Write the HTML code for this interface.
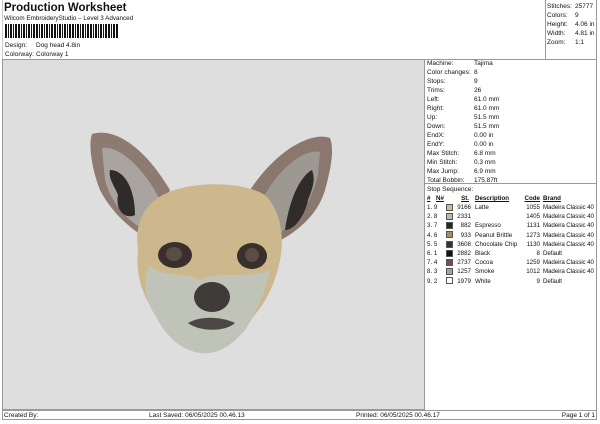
<!DOCTYPE html><html><head><style>
*{margin:0;padding:0;box-sizing:border-box}
body{width:600px;height:424px;background:#fff;position:relative;font-family:"Liberation Sans",sans-serif;font-size:6.5px;color:#111;overflow:hidden}
.a{position:absolute;white-space:nowrap;line-height:9px}
.r{text-align:right}
.t{font-size:6.2px}
.sw{position:absolute;width:7px;height:7px;border:1px solid #555}
u{text-decoration:underline;font-weight:bold}
</style></head><body>
<div class="a" style="left:4px;top:2px;font-size:11.5px;font-weight:bold;line-height:13px">Production Worksheet</div>
<div class="a" style="left:4px;top:14px;font-size:6.3px">Wilcom EmbroideryStudio – Level 3 Advanced</div>
<svg style="position:absolute;left:5px;top:24px" width="114" height="14">
<g fill="#111">
<rect x="0" width="2" height="14"/><rect x="3" width="1" height="14"/><rect x="5" width="2" height="14"/><rect x="8" width="1" height="14"/><rect x="10" width="2" height="14"/><rect x="13" width="2" height="14"/><rect x="16" width="1" height="14"/><rect x="18" width="2" height="14"/><rect x="21" width="1" height="14"/><rect x="23" width="2" height="14"/><rect x="26" width="1" height="14"/><rect x="28" width="2" height="14"/><rect x="31" width="2" height="14"/><rect x="34" width="1" height="14"/><rect x="36" width="2" height="14"/><rect x="39" width="1" height="14"/><rect x="41" width="2" height="14"/><rect x="44" width="1" height="14"/><rect x="46" width="2" height="14"/><rect x="49" width="2" height="14"/><rect x="52" width="1" height="14"/><rect x="54" width="2" height="14"/><rect x="57" width="1" height="14"/><rect x="59" width="2" height="14"/><rect x="62" width="1" height="14"/><rect x="64" width="2" height="14"/><rect x="67" width="2" height="14"/><rect x="70" width="1" height="14"/><rect x="72" width="2" height="14"/><rect x="75" width="1" height="14"/><rect x="77" width="2" height="14"/><rect x="80" width="1" height="14"/><rect x="82" width="2" height="14"/><rect x="85" width="2" height="14"/><rect x="88" width="1" height="14"/><rect x="90" width="2" height="14"/><rect x="93" width="1" height="14"/><rect x="95" width="2" height="14"/><rect x="98" width="1" height="14"/><rect x="100" width="2" height="14"/><rect x="103" width="2" height="14"/><rect x="106" width="1" height="14"/><rect x="108" width="2" height="14"/><rect x="111" width="2" height="14"/>
</g></svg>
<div class="a" style="left:5px;top:41px">Design:</div><div class="a" style="left:36px;top:41px">Dog head 4.8in</div>
<div class="a" style="left:5px;top:50px">Colorway:</div><div class="a" style="left:36px;top:50px">Colorway 1</div>

<div style="position:absolute;left:2px;top:59px;width:423px;height:351px;background:#dedede;border:1px solid #999"></div>
<div style="position:absolute;left:425px;top:59px;width:172px;height:351px;border-top:1px solid #999;border-right:1px solid #999"></div>
<div style="position:absolute;left:545px;top:0;width:52px;height:59px;border-left:1px solid #999;border-right:1px solid #999"></div>
<div style="position:absolute;left:2px;top:0;width:1px;height:59px;background:#ccc"></div>
<div style="position:absolute;left:425px;top:183px;width:172px;height:1px;background:#999"></div>
<div style="position:absolute;left:2px;top:410px;width:595px;height:10px;border:1px solid #999"></div>

<svg style="position:absolute;left:80px;top:120px" width="260" height="250" viewBox="0 0 260 250">
<path d="M12 14 C30 8 60 20 90 70 L70 120 C50 110 30 90 20 70 C12 50 8 25 12 14Z" fill="#8d7a70"/>
<path d="M22 28 C40 25 65 50 80 80 L65 110 C45 100 30 80 25 60Z" fill="#a9a49f"/>
<path d="M30 50 C45 50 55 70 55 95 C45 100 35 90 38 75 C34 65 28 58 30 50Z" fill="#2e2c2a"/>
<path d="M250 18 C235 12 200 25 170 70 L190 125 C215 115 238 95 245 70 C252 45 254 28 250 18Z" fill="#8a786e"/>
<path d="M240 32 C225 28 195 50 180 85 L195 115 C218 105 232 80 238 55Z" fill="#9e9893"/>
<path d="M232 50 C222 55 210 75 205 110 C215 110 225 95 228 80 C232 70 236 60 232 50Z" fill="#2f2c2a"/>
<path d="M75 80 C100 60 160 60 185 75 C200 90 205 115 200 140 C195 165 185 185 170 200 C160 215 140 228 125 228 C110 228 92 215 80 200 C65 180 55 160 58 130 C55 110 60 92 75 80Z" fill="#cdb78c"/>
<path d="M70 145 C85 160 105 150 120 160 C140 150 165 160 190 150 C185 175 175 195 165 210 C150 228 135 235 120 233 C100 230 85 215 75 195 C65 180 62 160 70 145Z" fill="#bfc3b8"/>
<ellipse cx="95" cy="135" rx="17" ry="13" fill="#3a302b"/>
<ellipse cx="94" cy="134" rx="8" ry="7" fill="#5a4d45"/>
<ellipse cx="172" cy="136" rx="15" ry="13" fill="#3a302b"/>
<ellipse cx="172" cy="135" rx="7" ry="7" fill="#5a4d45"/>
<ellipse cx="132" cy="177" rx="18" ry="15" fill="#3e3b38"/>
<path d="M108 203 C120 196 140 196 155 203 C145 212 120 212 108 203Z" fill="#4a4744"/>
</svg>

<div class="a" style="left:547px;top:2px">Stitches:</div><div class="a" style="left:575px;top:2px">25777</div>
<div class="a" style="left:547px;top:11px">Colors:</div><div class="a" style="left:575px;top:11px">9</div>
<div class="a" style="left:547px;top:20px">Height:</div><div class="a" style="left:575px;top:20px">4.06 in</div>
<div class="a" style="left:547px;top:29px">Width:</div><div class="a" style="left:575px;top:29px">4.81 in</div>
<div class="a" style="left:547px;top:38px">Zoom:</div><div class="a" style="left:575px;top:38px">1:1</div>

<div class="a" style="left:427px;top:59px;line-height:9px">Machine:<br>Color changes:<br>Stops:<br>Trims:<br>Left:<br>Right:<br>Up:<br>Down:<br>EndX:<br>EndY:<br>Max Stitch:<br>Min Stitch:<br>Max Jump:<br>Total Bobbin:</div>
<div class="a" style="left:474px;top:59px;line-height:9px">Tajima<br>8<br>9<br>26<br>61.0 mm<br>61.0 mm<br>51.5 mm<br>51.5 mm<br>0.00 in<br>0.00 in<br>6.8 mm<br>0.3 mm<br>6.9 mm<br>175.87ft</div>

<div class="a" style="left:427px;top:185px">Stop Sequence:</div>
<div class="a t" style="left:427px;top:194px"><u>#</u></div>
<div class="a t" style="left:436px;top:194px"><u>N#</u></div>
<div class="a r t" style="left:440px;width:29px;top:194px"><u>St.</u></div>
<div class="a t" style="left:475px;top:194px"><u>Description</u></div>
<div class="a r t" style="left:510px;width:30px;top:194px"><u>Code</u></div>
<div class="a t" style="left:543px;top:194px"><u>Brand</u></div>

<div class="a t" style="left:427px;top:203px;line-height:9.2px">1. 9<br>2. 8<br>3. 7<br>4. 6<br>5. 5<br>6. 1<br>7. 4<br>8. 3<br>9. 2</div>
<div class="sw" style="left:446px;top:204px;background:#d9b98a"></div>
<div class="sw" style="left:446px;top:213px;background:#b8bcb0"></div>
<div class="sw" style="left:446px;top:222px;background:#2a2624"></div>
<div class="sw" style="left:446px;top:231px;background:#a88c60"></div>
<div class="sw" style="left:446px;top:241px;background:#3c302a"></div>
<div class="sw" style="left:446px;top:250px;background:#111"></div>
<div class="sw" style="left:446px;top:259px;background:#6e5048"></div>
<div class="sw" style="left:446px;top:268px;background:#9aa3a6"></div>
<div class="sw" style="left:446px;top:277px;background:#fff"></div>
<div class="a r t" style="left:440px;width:31px;top:203px;line-height:9.2px">9166<br>2331<br>882<br>933<br>3608<br>2882<br>2737<br>1257<br>1979</div>
<div class="a t" style="left:475px;top:203px;line-height:9.2px">Latte<br>&nbsp;<br>Espresso<br>Peanut Brittle<br>Chocolate Chip<br>Black<br>Cocoa<br>Smoke<br>White</div>
<div class="a r t" style="left:510px;width:30px;top:203px;line-height:9.2px">1055<br>1405<br>1131<br>1273<br>1130<br>8<br>1259<br>1012<br>9</div>
<div class="a t" style="left:543px;top:203px;line-height:9.2px;letter-spacing:-0.1px">Madeira Classic 40<br>Madeira Classic 40<br>Madeira Classic 40<br>Madeira Classic 40<br>Madeira Classic 40<br>Default<br>Madeira Classic 40<br>Madeira Classic 40<br>Default</div>

<div class="a" style="left:4px;top:411px">Created By:</div>
<div class="a" style="left:149px;top:411px">Last Saved: 06/05/2025 00.46.13</div>
<div class="a" style="left:356px;top:411px">Printed: 06/05/2025 00.46.17</div>
<div class="a r" style="left:540px;width:55px;top:411px">Page 1 of 1</div>
</body></html>
